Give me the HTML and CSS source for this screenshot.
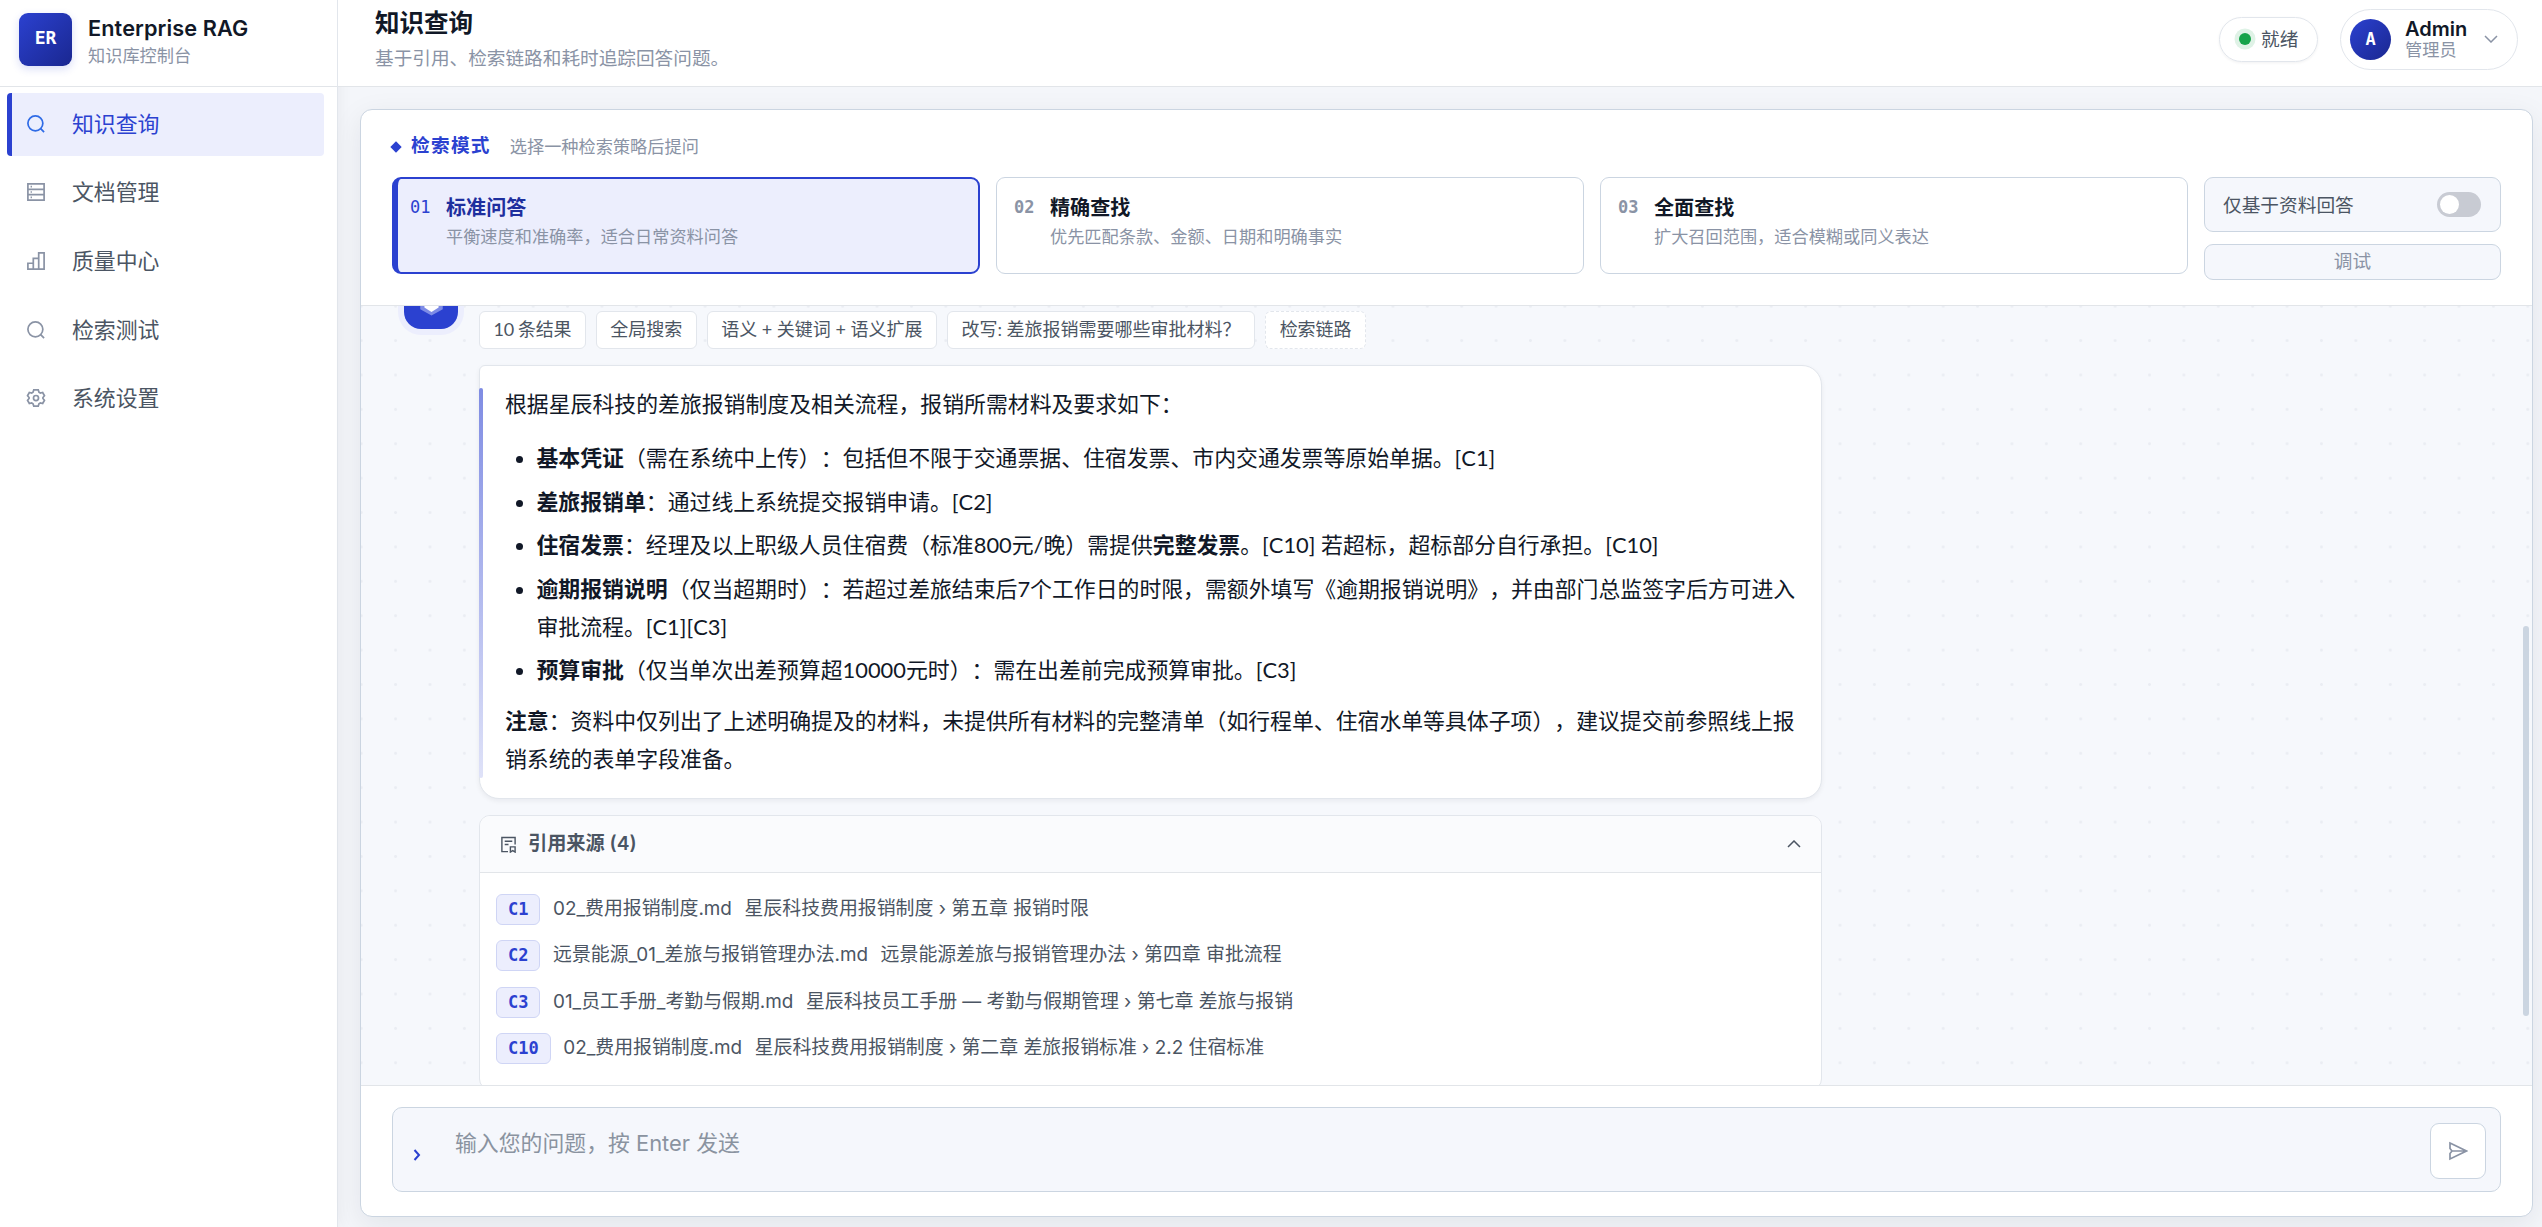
FILE: index.html
```html
<!DOCTYPE html>
<html lang="zh-CN">
<head>
    <meta charset="UTF-8">
    <meta name="viewport" content="width=device-width, initial-scale=1.0">
    <title>Enterprise RAG</title>
    <link rel="stylesheet" href="styles.css">
</head>
<body>
    <aside class="sidebar">
        <div class="brand">
            <div class="brand-logo">ER</div>
            <div class="brand-text">
                <div class="brand-name">Enterprise RAG</div>
                <div class="brand-sub">知识库控制台</div>
            </div>
        </div>
        <nav class="nav">
            <a class="nav-item active">
                <svg viewBox="0 0 20 20"><circle cx="9.3" cy="9.3" r="8.3"/><path d="M15.2 15.2L19 19"/></svg>
                <span>知识查询</span>
            </a>
            <a class="nav-item">
                <svg viewBox="0 0 20 20"><path d="M1 1h18v18H1zM1 7h18M1 13h18M4 4h1.500M4 10h1.500M4 16h1.500"/></svg>
                <span>文档管理</span>
            </a>
            <a class="nav-item">
                <svg viewBox="0 0 20 20"><path d="M1 12.500h6V19H1zM7 7h6v12H7zM13 1h6v18h-6z"/></svg>
                <span>质量中心</span>
            </a>
            <a class="nav-item">
                <svg viewBox="0 0 20 20"><circle cx="9.3" cy="9.3" r="8.3"/><path d="M15.2 15.2L19 19"/></svg>
                <span>检索测试</span>
            </a>
            <a class="nav-item">
                <svg viewBox="0 0 20 20"><path d="M7.500 1h5l.8 2.600 1.500.9 2.600-.6 2 3.600-1.700 1.900v1.200l1.700 1.900-2 3.600-2.600-.6-1.500.9-.8 2.600h-5l-.8-2.600-1.500-.9-2.600.6-2-3.600 1.700-1.900V9.400L.600 7.500l2-3.600 2.600.6 1.500-.9z"/><circle cx="10" cy="10" r="2.800"/></svg>
                <span>系统设置</span>
            </a>
        </nav>
    </aside>

    <div class="main">
        <header class="topbar">
            <div class="page-head">
                <h1>知识查询</h1>
                <p>基于引用、检索链路和耗时追踪回答问题。</p>
            </div>
            <div class="topbar-right">
                <div class="status"><i></i>就绪</div>
                <div class="user">
                    <div class="user-avatar">A</div>
                    <div class="user-text">
                        <div class="user-name">Admin</div>
                        <div class="user-role">管理员</div>
                    </div>
                    <svg class="user-arrow" viewBox="0 0 14 8"><path d="M1 1l6 6 6-6"/></svg>
                </div>
            </div>
        </header>

        <main class="panel">
            <section class="modes">
                <div class="modes-head">
                    <i class="diamond"></i>
                    <h2>检索模式</h2>
                    <span>选择一种检索策略后提问</span>
                </div>
                <div class="modes-grid">
                    <div class="mode active">
                        <span class="mode-num">01</span>
                        <div>
                            <h3>标准问答</h3>
                            <p>平衡速度和准确率，适合日常资料问答</p>
                        </div>
                    </div>
                    <div class="mode">
                        <span class="mode-num">02</span>
                        <div>
                            <h3>精确查找</h3>
                            <p>优先匹配条款、金额、日期和明确事实</p>
                        </div>
                    </div>
                    <div class="mode">
                        <span class="mode-num">03</span>
                        <div>
                            <h3>全面查找</h3>
                            <p>扩大召回范围，适合模糊或同义表达</p>
                        </div>
                    </div>
                    <div class="mode-side">
                        <div class="only-docs">仅基于资料回答<span class="switch"></span></div>
                        <div class="debug">调试</div>
                    </div>
                </div>
            </section>

            <section class="chat">
                <div class="message">
                    <div class="bot">
                        <svg viewBox="0 0 24 24"><path class="bot-outer" d="M12 .5l10 5.500v12l-10 5.500L2 18V6z"/><path class="bot-inner" d="M12 4l6.300 4v8.500L12 20.500l-6.300-4V8z"/></svg>
                    </div>
                    <div class="message-body">
                        <div class="chips">
                            <span class="chip count">10 条结果</span>
                            <span class="chip">全局搜索</span>
                            <span class="chip">语义 + 关键词 + 语义扩展</span>
                            <span class="chip">改写: 差旅报销需要哪些审批材料？</span>
                            <span class="chip dashed">检索链路</span>
                        </div>

                        <article class="answer">
                            <p>根据星辰科技的差旅报销制度及相关流程，报销所需材料及要求如下：</p>
                            <ul>
                                <li><strong>基本凭证</strong>（需在系统中上传）：包括但不限于交通票据、住宿发票、市内交通发票等原始单据。[C1]</li>
                                <li><strong>差旅报销单</strong>：通过线上系统提交报销申请。[C2]</li>
                                <li><strong>住宿发票</strong>：经理及以上职级人员住宿费（标准800元/晚）需提供<strong>完整发票</strong>。[C10] 若超标，超标部分自行承担。[C10]</li>
                                <li><strong>逾期报销说明</strong>（仅当超期时）：若超过差旅结束后7个工作日的时限，需额外填写《逾期报销说明》，并由部门总监签字后方可进入审批流程。[C1][C3]</li>
                                <li><strong>预算审批</strong>（仅当单次出差预算超10000元时）：需在出差前完成预算审批。[C3]</li>
                            </ul>
                            <p><strong>注意</strong>：资料中仅列出了上述明确提及的材料，未提供所有材料的完整清单（如行程单、住宿水单等具体子项），建议提交前参照线上报销系统的表单字段准备。</p>
                        </article>

                        <div class="sources">
                            <div class="sources-head">
                                <svg class="sources-icon" viewBox="0 0 18 18"><path d="M8.500 16.500H2v-15h14V9M5 5.500h8M5 9h4M11 11.500h5V17l-2.500-1.500L11 17z"/></svg>
                                <span>引用来源 (4)</span>
                                <svg class="sources-arrow" viewBox="0 0 14 8"><path d="M1 7l6-6 6 6"/></svg>
                            </div>
                            <div class="sources-list">
                                <div class="source"><b>C1</b><span>02_费用报销制度.md</span><span>星辰科技费用报销制度 › 第五章 报销时限</span></div>
                                <div class="source"><b>C2</b><span>远景能源_01_差旅与报销管理办法.md</span><span>远景能源差旅与报销管理办法 › 第四章 审批流程</span></div>
                                <div class="source"><b>C3</b><span>01_员工手册_考勤与假期.md</span><span>星辰科技员工手册 — 考勤与假期管理 › 第七章 差旅与报销</span></div>
                                <div class="source"><b>C10</b><span>02_费用报销制度.md</span><span>星辰科技费用报销制度 › 第二章 差旅报销标准 › 2.2 住宿标准</span></div>
                            </div>
                        </div>
                    </div>
                </div>
                <div class="scroll-thumb"></div>
            </section>

            <footer class="composer">
                <div class="composer-box">
                    <span class="prompt"><svg viewBox="0 0 8 12"><path d="M1.500 1L6 6l-4.500 5"/></svg></span>
                    <div class="placeholder">输入您的问题，按 Enter 发送</div>
                    <div class="send">
                        <svg viewBox="0 0 20 20"><path d="M2 2l16.500 8L2 18V12.500L4 10 2 7.500zM4 10h14"/></svg>
                    </div>
                </div>
            </footer>
        </main>
    </div>
</body>
</html>
```
FILE: styles.css
```css
* {
    box-sizing: border-box;
}
body {
    margin: 0;
    height: 1227px;
    display: flex;
    overflow: hidden;
    background: #f4f6fa;
    font-family: Lato, "Noto Sans CJK SC", sans-serif;
    color: #111827;
    text-spacing-trim: space-all;
}
h1, h2, h3, p, ul {
    margin: 0;
    padding: 0;
}
svg {
    display: block;
    flex: none;
    fill: none;
    stroke: currentColor;
    stroke-width: 1.5;
}

/* sidebar */
.sidebar {
    width: 338px;
    flex: none;
    background: #fff;
    border-right: 1px solid #e2e6ec;
    box-shadow: 2px 0 14px rgba(15, 23, 42, 0.05);
}
.brand {
    height: 87px;
    padding: 0 19px 8px;
    display: flex;
    align-items: center;
    gap: 16px;
    border-bottom: 1px solid #e2e5e9;
}
.brand-logo {
    width: 53px;
    height: 53px;
    border-radius: 9px;
    background: linear-gradient(135deg, #2b41d0, #1a2790);
    box-shadow: 0 3px 9px rgba(43, 65, 208, 0.18);
    color: #fff;
    font: bold 18px/50px "DejaVu Sans Mono", monospace;
    text-align: center;
}
.brand-name {
    margin-top: 4px;
    font: 600 21.700px/30px Inter, sans-serif;
    letter-spacing: 0.1px;
}
.brand-sub {
    font-size: 17.200px;
    line-height: 26px;
    color: #8a93a5;
}
.nav {
    padding: 6px 13px 0 7px;
    display: flex;
    flex-direction: column;
    gap: 5.700px;
}
.nav-item {
    height: 63px;
    padding: 0 0 2px 15px;
    display: flex;
    align-items: center;
    gap: 27px;
    border-left: 5px solid transparent;
    border-radius: 4px;
    font-size: 21.860px;
    line-height: 32px;
    color: #4b5563;
}
.nav-item svg {
    width: 18px;
    height: 18px;
    stroke-width: 1.900;
    overflow: visible;
    color: #8a93a5;
}
.nav-item.active {
    background: #eceefd;
    border-left-color: #2b41d0;
    color: #2b41d0;
}
.nav-item.active svg {
    color: #2f6be6;
}

/* top bar */
.main {
    flex: 1;
    min-width: 0;
    display: flex;
    flex-direction: column;
}
.topbar {
    height: 87px;
    flex: none;
    padding: 0 24px 8px 37px;
    display: flex;
    align-items: center;
    justify-content: space-between;
    background: #fff;
    border-bottom: 1px solid #e2e5e9;
}
.page-head h1 {
    font-size: 24.500px;
    line-height: 37px;
}
.page-head p {
    font-size: 18.650px;
    line-height: 34px;
    color: #8a93a5;
}
.topbar-right {
    display: flex;
    align-items: center;
    gap: 22px;
}
.status {
    height: 45px;
    width: 99px;
    padding: 0 0 3px 18px;
    display: flex;
    align-items: center;
    gap: 9px;
    border: 1px solid #e2e6ec;
    border-radius: 23px;
    box-shadow: 0 1px 3px rgba(15, 23, 42, 0.06);
    font-size: 18.650px;
    color: #4b5563;
}
.status i {
    width: 12px;
    height: 12px;
    margin: 3px 1px 0;
    border-radius: 50%;
    background: #16a34a;
    box-shadow: 0 0 0 4.500px #dff2e6;
}
.user {
    width: 178px;
    height: 61px;
    padding-left: 9px;
    display: flex;
    align-items: center;
    border: 1px solid #e2e6ec;
    border-radius: 31px;
}
.user-avatar {
    width: 41px;
    height: 41px;
    margin-right: 14px;
    border-radius: 50%;
    background: linear-gradient(135deg, #2b41d0, #1a2790);
    color: #fff;
    font: bold 17px/40px "DejaVu Sans Mono", monospace;
    text-align: center;
}
.user-name {
    font: 600 20px/20px Inter, sans-serif;
}
.user-role {
    font-size: 17.200px;
    line-height: 21px;
    color: #8a93a5;
}
.user-arrow {
    width: 14px;
    height: 8px;
    margin-left: 17px;
    color: #8a93a5;
}

/* panel */
.panel {
    width: 2173px;
    height: 1108px;
    margin: 22px 0 0 22px;
    display: flex;
    flex-direction: column;
    overflow: hidden;
    background: #fff;
    border: 1px solid #cbd5e1;
    border-radius: 12px;
    box-shadow: 0 8px 30px rgba(15, 23, 42, 0.08);
}
.modes {
    height: 196px;
    flex: none;
    padding: 20px 31px 0;
    border-bottom: 1px solid #e2e5e9;
}
.modes-head {
    height: 30px;
    display: flex;
    align-items: center;
}
.diamond {
    width: 8px;
    height: 8px;
    margin: 4px 11px 0 0;
    background: #2b41d0;
    transform: rotate(45deg);
}
.modes-head h2 {
    margin-right: 19px;
    font-size: 18.650px;
    line-height: 30px;
    letter-spacing: 1.300px;
    color: #2b41d0;
}
.modes-head span {
    font-size: 17.200px;
    color: #8a93a5;
}
.modes-grid {
    margin-top: 17px;
    display: grid;
    grid-template-columns: 1fr 1fr 1fr 297px;
    gap: 16px;
}
.mode {
    height: 97px;
    padding: 14px 17px 0;
    display: flex;
    gap: 15.500px;
    border: 1px solid #cbd5e1;
    border-radius: 9px;
}
.mode-num {
    font: bold 17px/31px "DejaVu Sans Mono", monospace;
    color: #8a93a5;
}
.mode h3 {
    font-size: 20.100px;
    line-height: 31px;
}
.mode p {
    font-size: 17.200px;
    line-height: 28px;
    color: #8a93a5;
}
.mode.active {
    padding: 13px 12px 0;
    background: #eceefd;
    border: 2px solid #2b41d0;
    border-left-width: 6px;
}
.mode.active h3 {
    color: #1e2f9e;
}
.mode.active .mode-num {
    color: #2b41d0;
    font-weight: normal;
}
.only-docs {
    height: 55px;
    padding: 0 19px 0 18px;
    display: flex;
    align-items: center;
    justify-content: space-between;
    background: #f5f7fc;
    border: 1px solid #cbd5e1;
    border-radius: 9px;
    font-size: 18.700px;
    line-height: 24px;
    color: #4b5563;
}
.switch {
    width: 44px;
    height: 25px;
    padding: 3px;
    border-radius: 13px;
    background: #c8cbd3;
}
.switch::before {
    content: "";
    display: block;
    width: 19px;
    height: 19px;
    border-radius: 50%;
    background: #fff;
}
.debug {
    height: 36px;
    margin-top: 12px;
    background: #f5f7fc;
    border: 1px solid #cbd5e1;
    border-radius: 9px;
    font-size: 18.650px;
    line-height: 32px;
    text-align: center;
    color: #8a93a5;
}

/* chat */
.chat {
    position: relative;
    flex: 1;
    min-height: 0;
    overflow: hidden;
    background: #f6f8fc radial-gradient(circle, #eaedf3 1px, transparent 1.800px) -17px -17px / 34.400px 34.400px;
}
.message {
    padding: 5px 0 0 43px;
    display: flex;
    align-items: flex-start;
    gap: 21px;
}
.bot {
    width: 54px;
    height: 54px;
    flex: none;
    margin-top: -36px;
    display: flex;
    align-items: center;
    justify-content: center;
    border-radius: 17px;
    background: #2b41d0;
    box-shadow: 0 0 0 6px #eceefd;
}
.bot svg {
    width: 27px;
    height: 27px;
    stroke: none;
}
.bot-outer {
    fill: #7d8be6;
}
.bot-inner {
    fill: #fff;
}
.message-body {
    width: 1343px;
}
.chips {
    display: flex;
    gap: 10px;
}
.chip {
    height: 38px;
    padding: 0 13.500px;
    background: #fff;
    border: 1px solid #e2e6ec;
    border-radius: 6px;
    font-size: 18px;
    line-height: 35px;
    white-space: nowrap;
    color: #4b5563;
}
.chip.count {
    letter-spacing: -0.300px;
}
.chip.dashed {
    border-style: dashed;
}
.answer {
    position: relative;
    height: 434px;
    margin-top: 16px;
    padding: 19px 24px 0 25px;
    background: #fff;
    border: 1px solid #e2e6ec;
    border-radius: 6px 20px 20px 20px;
    box-shadow: 0 2px 5px rgba(15, 23, 42, 0.06);
    font-size: 21.860px;
    line-height: 38.200px;
}
.answer::before {
    content: "";
    position: absolute;
    left: -1px;
    top: 22px;
    width: 4px;
    height: 390px;
    border-radius: 2px;
    background: linear-gradient(#7f8ce3, #dfe2f8);
}
.answer ul {
    margin: 16px 0 12px;
    padding-left: 31.500px;
}
.answer li + li {
    margin-top: 5.300px;
}
.sources {
    height: 275px;
    margin-top: 16px;
    overflow: hidden;
    background: #fff;
    border: 1px solid #e2e6ec;
    border-radius: 11px;
    font-family: Inter, "Noto Sans CJK SC", sans-serif;
}
.sources-head {
    height: 57px;
    padding: 0 20px;
    display: flex;
    align-items: center;
    gap: 11px;
    background: #fafbfd;
    border-bottom: 1px solid #e2e5e9;
    font-size: 19.200px;
    line-height: 28px;
    font-weight: 600;
    color: #4b5563;
}
.sources-head span {
    flex: 1;
    padding-bottom: 2px;
}
.sources-icon {
    width: 17px;
    height: 17px;
}
.sources-arrow {
    width: 14px;
    height: 8px;
}
.sources-list {
    padding: 21px 16px;
    display: flex;
    flex-direction: column;
    gap: 15.400px;
}
.source {
    height: 31px;
    display: flex;
    align-items: center;
    gap: 12.500px;
    font-size: 18.900px;
    line-height: 28px;
    white-space: nowrap;
    color: #4b5563;
}
.source b {
    height: 31px;
    padding: 0 11px;
    background: #eceefd;
    border: 1px solid #cfd5f5;
    border-radius: 6px;
    font: bold 17px/28px "DejaVu Sans Mono", monospace;
    color: #2b41d0;
}
.source span {
    padding-bottom: 1px;
}
.scroll-thumb {
    position: absolute;
    right: 3px;
    top: 320px;
    width: 6px;
    height: 390px;
    border-radius: 3px;
    background: #cbd5e1;
}

/* composer */
.composer {
    height: 131px;
    flex: none;
    padding: 21px 31px 0;
    border-top: 1px solid #e2e5e9;
}
.composer-box {
    height: 85px;
    padding-right: 14px;
    display: flex;
    align-items: center;
    background: #f5f7fc;
    border: 1px solid #cbd5e1;
    border-radius: 10px;
}
.prompt {
    margin: 11px 0 0 20px;
    color: #2b41d0;
}
.prompt svg {
    width: 8px;
    height: 12px;
    stroke-width: 2;
}
.placeholder {
    flex: 1;
    margin: -14px 0 0 34px;
    font-family: Inter, "Noto Sans CJK SC", sans-serif;
    font-size: 21.860px;
    line-height: 34px;
    color: #8a93a0;
}
.send {
    width: 56px;
    height: 56px;
    margin-top: 2px;
    display: flex;
    align-items: center;
    justify-content: center;
    background: #fff;
    border: 1px solid #cbd5e1;
    border-radius: 9px;
    color: #8a93a5;
}
.send svg {
    width: 20px;
    height: 20px;
    stroke-width: 1.700;
}
```
